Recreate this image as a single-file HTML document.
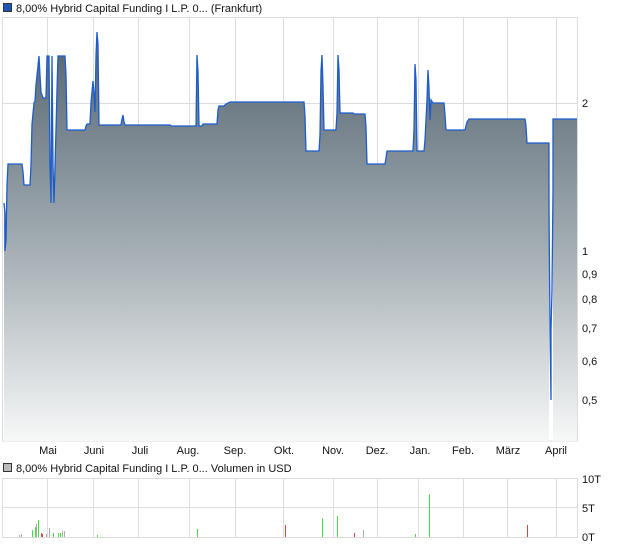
<!DOCTYPE html>
<html><head><meta charset="utf-8"><style>
body{margin:0;width:620px;height:546px;background:#fff;overflow:hidden;font-family:"Liberation Sans",sans-serif;}
</style></head><body>
<svg width="620" height="546" xmlns="http://www.w3.org/2000/svg" font-family="Liberation Sans, sans-serif" font-size="11" fill="#111">
<defs><linearGradient id="g" gradientUnits="userSpaceOnUse" x1="0" y1="55" x2="0" y2="441">
<stop offset="0" stop-color="#5c6b76"/><stop offset="0.5" stop-color="#a3adb3"/><stop offset="1" stop-color="#f7f8f8"/></linearGradient></defs>
<rect x="3.5" y="3.5" width="8" height="8" fill="#1f55b5" stroke="#333" stroke-width="1"/>
<text x="16" y="12">8,00% Hybrid Capital Funding I L.P. 0... (Frankfurt)</text>
<g stroke="#dcdcdc" stroke-width="1">
<rect x="2.5" y="17.5" width="575" height="423.5" fill="none"/>
<line x1="3" y1="103.5" x2="577" y2="103.5"/>
<line x1="47.5" y1="18" x2="47.5" y2="441"/><line x1="93.5" y1="18" x2="93.5" y2="441"/><line x1="138.5" y1="18" x2="138.5" y2="441"/><line x1="189.5" y1="18" x2="189.5" y2="441"/><line x1="235.5" y1="18" x2="235.5" y2="441"/><line x1="283.5" y1="18" x2="283.5" y2="441"/><line x1="333.5" y1="18" x2="333.5" y2="441"/><line x1="377.5" y1="18" x2="377.5" y2="441"/><line x1="418.5" y1="18" x2="418.5" y2="441"/><line x1="463.5" y1="18" x2="463.5" y2="441"/><line x1="507.5" y1="18" x2="507.5" y2="441"/><line x1="556.5" y1="18" x2="556.5" y2="441"/>
</g>
<polygon fill="url(#g)" stroke="none" points="4,441 4,203 5,213 5,251 6,240 7,186 8,164 22,164 23,172 24,185 30,185 31,165 32,124 34,103 35,101 36,85 38,66 39,56 40,75 41,92 43,98 46,98 47,56 49,56 50,165 51,203 52,56 53,165 54,203 56,130 57,90 58,56 65,56 66,75 67,130 85,130 86,126 87,124 90,124 91,103 93,81 94,93 95,112 96,55 97,32 98,45 99,125 121,125 122,119 123,115 124,122 125,125 170,125 171,126 196,126 197,55 198,72 199,126 202,126 203,124 217,124 218,110 219,106 224,106 226,104 230,102 304,102 305,116 306,151 319,151 320,135 321,71 322,55 323,86 324,130 336,130 337,113 338,55 339,70 340,113 353,113 354,114 365,114 366,127 367,164 385,164 386,158 387,151 413,151 414,130 415,64 416,80 417,151 424,151 425,140 427,100 428,70 429,88 430,120 431,100 433,103 444,103 445,115 446,130 465,130 467,122 469,119 525,119 526,126 527,143 549,143 549,441 553,441 553,119 577,119 577,441"/>
<polyline fill="none" stroke="#1d5ccc" stroke-width="1.3" points="4,203 5,213 5,251 6,240 7,186 8,164 22,164 23,172 24,185 30,185 31,165 32,124 34,103 35,101 36,85 38,66 39,56 40,75 41,92 43,98 46,98 47,56 49,56 50,165 51,203 52,56 53,165 54,203 56,130 57,90 58,56 65,56 66,75 67,130 85,130 86,126 87,124 90,124 91,103 93,81 94,93 95,112 96,55 97,32 98,45 99,125 121,125 122,119 123,115 124,122 125,125 170,125 171,126 196,126 197,55 198,72 199,126 202,126 203,124 217,124 218,110 219,106 224,106 226,104 230,102 304,102 305,116 306,151 319,151 320,135 321,71 322,55 323,86 324,130 336,130 337,113 338,55 339,70 340,113 353,113 354,114 365,114 366,127 367,164 385,164 386,158 387,151 413,151 414,130 415,64 416,80 417,151 424,151 425,140 427,100 428,70 429,88 430,120 431,100 433,103 444,103 445,115 446,130 465,130 467,122 469,119 525,119 526,126 527,143 549,143 549,207 550,330 551,400 551,330 552,290 553,190 553,119 577,119"/>
<g font-size="11">
<text x="582" y="107">2</text><text x="582" y="255">1</text><text x="582" y="278">0,9</text><text x="582" y="303">0,8</text><text x="582" y="332">0,7</text><text x="582" y="365">0,6</text><text x="582" y="404">0,5</text>
</g>
<g font-size="11" text-anchor="middle">
<text x="48" y="454">Mai</text><text x="94" y="454">Juni</text><text x="140" y="454">Juli</text><text x="188" y="454">Aug.</text><text x="235" y="454">Sep.</text><text x="284" y="454">Okt.</text><text x="333" y="454">Nov.</text><text x="377" y="454">Dez.</text><text x="420" y="454">Jan.</text><text x="463" y="454">Feb.</text><text x="508" y="454">März</text><text x="556" y="454">April</text>
</g>
<rect x="3.5" y="463.5" width="8" height="8" fill="#bbb" stroke="#333" stroke-width="1"/>
<text x="16" y="472">8,00% Hybrid Capital Funding I L.P. 0... Volumen in USD</text>
<g stroke="#dcdcdc" stroke-width="1">
<rect x="2.5" y="478.5" width="575" height="59" fill="none"/>
<line x1="3" y1="507.5" x2="577" y2="507.5"/>
<line x1="47.5" y1="479" x2="47.5" y2="537"/><line x1="93.5" y1="479" x2="93.5" y2="537"/><line x1="138.5" y1="479" x2="138.5" y2="537"/><line x1="189.5" y1="479" x2="189.5" y2="537"/><line x1="235.5" y1="479" x2="235.5" y2="537"/><line x1="283.5" y1="479" x2="283.5" y2="537"/><line x1="333.5" y1="479" x2="333.5" y2="537"/><line x1="377.5" y1="479" x2="377.5" y2="537"/><line x1="418.5" y1="479" x2="418.5" y2="537"/><line x1="463.5" y1="479" x2="463.5" y2="537"/><line x1="507.5" y1="479" x2="507.5" y2="537"/><line x1="556.5" y1="479" x2="556.5" y2="537"/>
</g>
<g stroke-width="1">
<line x1="19.5" y1="537" x2="19.5" y2="535" stroke="#aaa"/><line x1="21.5" y1="537" x2="21.5" y2="534" stroke="#aaa"/>
<line x1="32.5" y1="537" x2="32.5" y2="530" stroke="#4d4"/><line x1="35.5" y1="537" x2="35.5" y2="527" stroke="#4d4"/><line x1="36.5" y1="537" x2="36.5" y2="524" stroke="#aaa"/><line x1="38.5" y1="537" x2="38.5" y2="520" stroke="#4d4"/>
<line x1="41.5" y1="537" x2="41.5" y2="533" stroke="#d44"/><line x1="42.5" y1="537" x2="42.5" y2="534" stroke="#d44"/><line x1="46.5" y1="537" x2="46.5" y2="534" stroke="#aaa"/><line x1="49.5" y1="537" x2="49.5" y2="528" stroke="#aaa"/>
<line x1="53.5" y1="537" x2="53.5" y2="533" stroke="#4d4"/><line x1="58.5" y1="537" x2="58.5" y2="533" stroke="#4d4"/><line x1="60.5" y1="537" x2="60.5" y2="533" stroke="#4d4"/><line x1="62.5" y1="537" x2="62.5" y2="531" stroke="#aaa"/><line x1="64.5" y1="537" x2="64.5" y2="531" stroke="#aaa"/>
<line x1="97.5" y1="537" x2="97.5" y2="535" stroke="#4d4"/><line x1="197.5" y1="537" x2="197.5" y2="529" stroke="#4d4"/><line x1="285.5" y1="537" x2="285.5" y2="525" stroke="#d44"/><line x1="322.5" y1="537" x2="322.5" y2="518" stroke="#4d4"/><line x1="337.5" y1="537" x2="337.5" y2="516" stroke="#4d4"/><line x1="354.5" y1="537" x2="354.5" y2="533" stroke="#d44"/><line x1="363.5" y1="537" x2="363.5" y2="530" stroke="#aaa"/><line x1="415.5" y1="537" x2="415.5" y2="534" stroke="#4d4"/><line x1="429.5" y1="537" x2="429.5" y2="494" stroke="#4d4"/><line x1="527.5" y1="537" x2="527.5" y2="525" stroke="#d44"/>
</g>
<g font-size="11"><text x="582" y="483">10T</text><text x="582" y="512">5T</text><text x="582" y="541">0T</text></g>
</svg>
</body></html>
